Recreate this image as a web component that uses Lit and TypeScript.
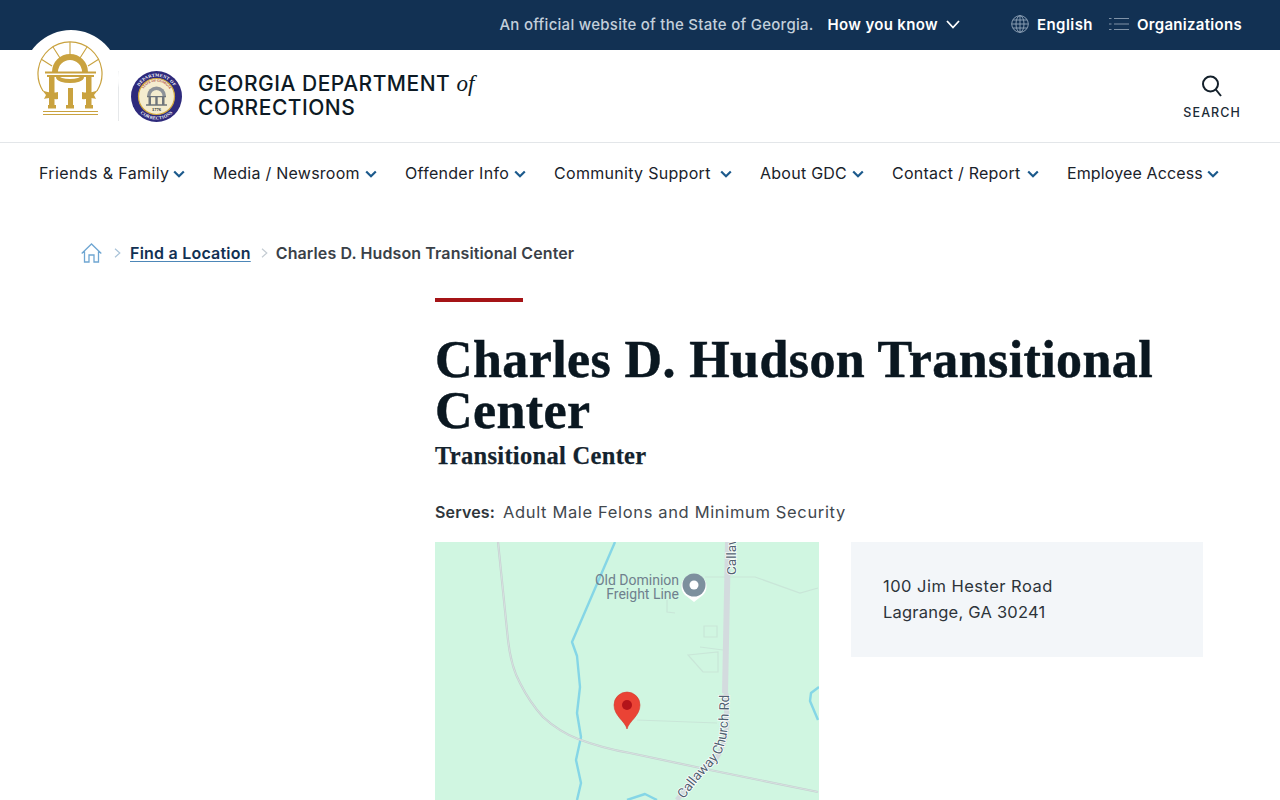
import { LitElement, html, css, svg } from "lit";
import { customElement } from "lit/decorators.js";

const chevron = html`<svg class="nav-chev" width="12" height="8" viewBox="0 0 12 8"><path d="M1.2 1.5 6 6.200l4.800-4.700" fill="none" stroke="#1c5a8c" stroke-width="2.200"/></svg>`;

const navItems: [string, number, number][] = [
  ["Friends & Family", 130, 0.38],
  ["Media / Newsroom", 148, 0.25],
  ["Offender Info", 105, 0.3],
  ["Community Support", 162, 0.3],
  ["About GDC", 88, 0.25],
  ["Contact / Report", 131, 0.25],
  ["Employee Access", 136, 0.12],
];

const gold = "#c9a23f";
const archLogo = svg`
  <svg class="arch" width="68" height="76" viewBox="0 0 68 76">
    <g fill="none" stroke="${gold}">
      <path d="M7 50 A32 32 0 1 1 61 50" stroke-width="1.200"/>
      <path d="M34 1v13M17 6l7 11M51 6l-7 11M5 18l11 7M63 18l-11 7" stroke-width="1.100"/>
      <path d="M19 31A15 15 0 0 1 49 31" stroke-width="6"/>
      <path d="M22 36A12 4 0 0 0 46 36" stroke-width="4"/>
      <path d="M9 31.500H60M11 35H58" stroke-width="1.800"/>
      <path d="M7 70.500H62M7 73.500H62" stroke-width="1"/>
    </g>
    <g fill="${gold}">
      <rect x="13" y="36" width="5.500" height="28"/>
      <rect x="32" y="47" width="5" height="17"/>
      <rect x="50" y="36" width="5.500" height="28"/>
      <path d="M6 49c6 3 12 3 16 2v7c-3 .5-5 0-7-1-2 0-5 0-7 1l2-4z"/>
      <path d="M62 49c-6 3-12 3-16 2v7c3 .5 5 0 7-1 2 0 5 0 7 1l-2-4z"/>
      <rect x="12" y="64" width="8" height="3.500"/>
      <rect x="30" y="64" width="8" height="3.500"/>
      <rect x="49" y="64" width="8" height="3.500"/>
    </g>
  </svg>`;

const seal = svg`
  <svg class="seal" width="51" height="51" viewBox="0 0 51 51">
    <defs>
      <path id="sealTop" d="M5.500 25.500a20 20 0 0 1 40 0"/>
      <path id="sealBottom" d="M2.500 25.500a23 23 0 0 0 46 0"/>
      <path id="sealInner" d="M10.500 25.500a15 15 0 0 1 30 0"/>
    </defs>
    <circle cx="25.500" cy="25.500" r="25.500" fill="#2e2a7c"/>
    <circle cx="25.500" cy="25.500" r="18" fill="#f4eccf" stroke="#d1a83e" stroke-width="1.200"/>
    <text class="seal-t"><textPath href="#sealTop" startOffset="50%" text-anchor="middle">DEPARTMENT OF</textPath></text>
    <text class="seal-t"><textPath href="#sealBottom" startOffset="50%" text-anchor="middle">CORRECTIONS</textPath></text>
    <text class="seal-s"><textPath href="#sealInner" startOffset="50%" text-anchor="middle">STATE OF GEORGIA</textPath></text>
    <path d="M16 25a9.500 9.500 0 0 1 19 0z" fill="#8d9298"/>
    <path d="M19.500 25a6 6 0 0 1 12 0z" fill="#f4eccf"/>
    <path d="M16 25h19v1.300H16zM17.500 26.300H20v7h-2.500zM24.300 26.300h2.400v7h-2.400zM31 26.300h2.500v7H31zM15 33.300h21v1.400H15z" fill="#6f757b"/>
    <text class="seal-y" x="25.500" y="40" text-anchor="middle">1776</text>
  </svg>`;

const railway = "M63 0 73 98c2 18 6 32 12 43 6 12 14 24 23 34 11 10 22 17 35 22 16 6 34 11 52 14l80 17 108 22";

const map = svg`
  <svg class="map" width="384" height="258" viewBox="0 0 384 258">
    <rect width="384" height="258" fill="#d0f6e1"/>
    <g fill="none" stroke="#85d6e6" stroke-width="2.400" stroke-linejoin="round">
      <path d="M180 0 137 100l5 14 3 31-3 26 4 24-5 23 5 23-4 17"/>
      <path d="M384 145l-8 6-1 8 8 19"/>
      <path d="M192 258l18-6 12 6"/>
    </g>
    <g fill="none" stroke="#c9e6d8" stroke-width="1.200">
      <path d="M270 35h50l45 16 18-5"/>
      <path d="M269 84h13v11h-13zM253 113l30-3v20h-15zM265 105l23 3M202 178l80 3M232 58v12l8 1"/>
    </g>
    <path d="${railway}" fill="none" stroke="#c4d0d0" stroke-width="2.200"/>
    <path d="${railway}" fill="none" stroke="#dfe7e6" stroke-width=".7"/>
    <path d="M293 0 290 151" fill="none" stroke="#d3dbde" stroke-width="6"/>
    <path d="M291 151 292 185C290 200 287 208 282 215L258 238 242 258" fill="none" stroke="#d3dbde" stroke-width="5"/>
    <path id="roadLabel" d="M245 262 262 240 283 217C291 205 294 190 294 150" fill="none"/>
    <text class="road-t"><textPath href="#roadLabel" startOffset="6">Callaway Church Rd</textPath></text>
    <text class="road-t" transform="translate(301 33) rotate(-90)">Callaw</text>
    <text class="poi" text-anchor="end" x="244" y="43">Old Dominion</text>
    <text class="poi" text-anchor="end" x="244" y="57">Freight Line</text>
    <path d="M259 60 250 53a12.500 12.500 0 1 1 18 0z" fill="#fff"/>
    <circle cx="259" cy="43" r="11.500" fill="#7d909e"/>
    <circle cx="259" cy="43" r="4.500" fill="#fff"/>
    <path d="M192 187c-2-8-13-13-13-24a13 13 0 0 1 26 0c0 11-11 16-13 24z" fill="#ea4335" stroke="#d13a2e" stroke-width=".6"/>
    <circle cx="192" cy="163" r="5" fill="#b3141a"/>
  </svg>`;

@customElement("app-root")
export class AppRoot extends LitElement {
  static styles = css`
    :host {
      display: block;
      height: 800px;
      overflow: hidden;
      position: relative;
      background: #fff;
      font-family: Inter, "Noto Sans", sans-serif;
      color: #1c2329;
    }
    .topbar {
      height: 48px;
      padding-bottom: 2px;
      background: #123153;
      display: flex;
      align-items: center;
      justify-content: flex-end;
      padding-right: 38px;
      color: #fff;
      font-size: 15px;
      font-weight: 600;
    }
    .official { color: #c3cfdb; font-weight: 500; letter-spacing: 0.27px; margin-right: 14px; }
    .know { letter-spacing: 0.33px; margin-right: 8px; }
    .top-chev { margin-right: 51px; }
    .lang { margin-left: 8px; letter-spacing: 0.45px; }
    .orgs { margin-left: 8px; letter-spacing: 0.3px; }
    .lang-wrap { display: flex; align-items: center; margin-right: 16px; }
    .badge {
      position: absolute;
      left: 23px;
      top: 30px;
      width: 96px;
      height: 96px;
      border-radius: 50%;
      background: #fff;
    }
    .arch { position: absolute; left: 13px; top: 11px; }
    .header {
      height: 92px;
      border-bottom: 1px solid #e3e6e9;
      display: flex;
      align-items: center;
      padding-left: 118px;
      position: relative;
    }
    .divider { width: 1px; height: 50px; background: #e6e8ea; margin-right: 12px; }
    .seal { display: block; margin-right: 16px; margin-top: 1px; }
    .seal-t { font: 700 4.500px "Liberation Serif", serif; fill: #fff; letter-spacing: .2px; }
    .seal-s { font: 700 3.200px "Liberation Serif", serif; fill: #a4362e; }
    .seal-y { font: 700 4.500px "Liberation Serif", serif; fill: #222; }
    .title {
      font-size: 21px;
      line-height: 24px;
      font-weight: 500;
      color: #0d1a24;
      letter-spacing: 0.5px;
    }
    .title em { font-family: "Liberation Serif", serif; font-size: 23px; letter-spacing: 0; font-weight: 400; }
    .search {
      margin-left: auto;
      margin-right: 39px;
      display: flex;
      flex-direction: column;
      align-items: center;
      gap: 8px;
      font-size: 12.500px;
      font-weight: 500;
      letter-spacing: 1.100px;
      color: #1c2b36;
      margin-top: 2px;
    }
    .nav {
      display: flex;
      align-items: flex-start;
      padding: 20px 0 0 39px;
      height: 63px;
      font-size: 16px;
      line-height: 20px;
      color: #1a222a;
    }
    .nav-item { display: flex; align-items: center; margin-right: 28px; white-space: nowrap; }
    .nav-label { display: inline-block; }
    .nav-chev { margin-left: 4px; margin-top: 2px; }
    .crumbs {
      display: flex;
      align-items: center;
      padding: 16px 0 0 81px;
      height: 22px;
      font-size: 16px;
      font-weight: 600;
      color: #3a4148;
    }
    .crumbs span { letter-spacing: 0.11px; }
    .sep { margin: 0 9px 0 12px; }
    .crumbs a {
      color: #123153;
      letter-spacing: 0.22px;
      text-decoration: underline;
      text-decoration-color: #4d87b8;
      text-underline-offset: 2px;
    }
    .sep2 { margin: 0 8px 0 10px; }
    .main { padding: 34px 0 0 435px; }
    .rule { width: 88px; height: 4px; background: #a51417; }
    h1 {
      margin: 32px 0 0;
      font: 700 52px/51px "Liberation Serif", serif;
      letter-spacing: 0.4px;
      -webkit-text-stroke: 0.5px #0a1720;
      color: #0a1720;
      width: 780px;
    }
    h2 {
      margin: 4px 0 0;
      font: 700 24.500px/32px "Liberation Serif", serif;
      letter-spacing: 0.3px;
      -webkit-text-stroke: 0.25px #14232e;
      color: #14232e;
    }
    .serves {
      margin-top: 28px;
      font-size: 16.500px;
      line-height: 24px;
      color: #42484e;
      letter-spacing: 0.65px;
      display: flex;
      align-items: baseline;
      gap: 8px;
    }
    .serves b { font-size: 16px; font-weight: 600; color: #2f363c; letter-spacing: 0.15px; }
    .row { display: flex; gap: 32px; margin-top: 18px; align-items: flex-start; }
    .map { display: block; }
    .poi { font: 400 14px Roboto, sans-serif; fill: #6f808d; }
    .road-t { font: 400 13.500px Roboto, sans-serif; fill: #4f6270; paint-order: stroke; stroke: #fff; stroke-width: 1.500px; }
    .addr {
      width: 352px;
      height: 115px;
      box-sizing: border-box;
      background: #f3f6f9;
      padding: 31px 32px;
      font-size: 16.500px;
      line-height: 26px;
      color: #2d343a;
    }
    .a1 { letter-spacing: 0.47px; }
    .a2 { letter-spacing: 0.22px; }
  `;

  render() {
    return html`
      <div class="topbar">
        <span class="official">An official website of the State of Georgia.</span>
        <span class="know">How you know</span>
        <svg class="top-chev" width="14" height="9" viewBox="0 0 14 9"><path d="M1 1l6 6.500L13 1" fill="none" stroke="#fff" stroke-width="1.800"/></svg>
        <span class="lang-wrap">
          <svg width="18" height="18" viewBox="0 0 18 18" fill="none" stroke="#93a6ba" stroke-width=".9">
            <circle cx="9" cy="9" r="8.300"/><ellipse cx="9" cy="9" rx="4" ry="8.300"/>
            <path d="M9 .7v16.600M.7 9h16.600M1.800 5h14.400M1.800 13h14.400"/>
          </svg>
          <span class="lang">English</span>
        </span>
        <svg width="20" height="14" viewBox="0 0 20 14" fill="none" stroke="#8093a8" stroke-width="1">
          <path d="M5 1.500h15M5 7h15M5 12.500h15M0 1.500h2.500M0 7h2.500M0 12.500h2.500"/>
        </svg>
        <span class="orgs">Organizations</span>
      </div>

      <div class="header">
        <div class="divider"></div>
        ${seal}
        <div class="title">GEORGIA DEPARTMENT <em>of</em><br />CORRECTIONS</div>
        <div class="search">
          <svg width="22" height="22" viewBox="0 0 22 22" fill="none" stroke="#14202b" stroke-width="2">
            <circle cx="9.500" cy="9" r="7.500"/><path d="M14.800 14.500 20 21"/>
          </svg>
          <span>SEARCH</span>
        </div>
      </div>
      <div class="badge">${archLogo}</div>

      <nav class="nav">
        ${navItems.map(
          ([label, w, ls]) => html`<span class="nav-item"><span class="nav-label" style="width:${w}px;letter-spacing:${ls}px">${label}</span>${chevron}</span>`
        )}
      </nav>

      <div class="crumbs">
        <svg width="21" height="20" viewBox="0 0 21 20" fill="none" stroke="#6fa6d2" stroke-width="1.300">
          <path d="M.7 10.500 10.500 1l9.800 9.500M3.500 8.500V19h4.500v-7h5v7h4.500V8.500"/>
        </svg>
        <svg class="sep" width="7" height="10" viewBox="0 0 7 10"><path d="M1 .8 5.800 5 1 9.200" fill="none" stroke="#a9c3d8" stroke-width="1.200"/></svg>
        <a>Find a Location</a>
        <svg class="sep2" width="7" height="10" viewBox="0 0 7 10"><path d="M1 .8 5.800 5 1 9.200" fill="none" stroke="#c4ccd3" stroke-width="1.200"/></svg>
        <span>Charles D. Hudson Transitional Center</span>
      </div>

      <main class="main">
        <div class="rule"></div>
        <h1>Charles D. Hudson Transitional Center</h1>
        <h2>Transitional Center</h2>
        <div class="serves"><b>Serves:</b><span>Adult Male Felons and Minimum Security</span></div>
        <div class="row">
          ${map}
          <div class="addr"><span class="a1">100 Jim Hester Road</span><br /><span class="a2">Lagrange, GA 30241</span></div>
        </div>
      </main>
    `;
  }
}
